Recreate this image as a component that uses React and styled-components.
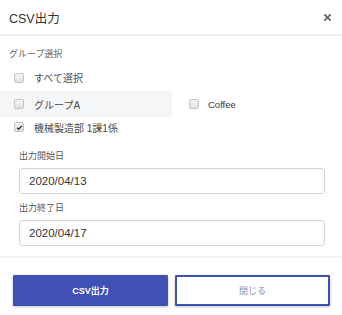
import React from 'react'
import styled, { createGlobalStyle } from 'styled-components'

const GlobalStyle = createGlobalStyle`
  html, body {
    margin: 0;
    padding: 0;
    background: #fff;
  }
  body {
    font-family: "Liberation Sans", Arial, "Noto Sans CJK JP", sans-serif;
    color: #333;
  }
`

const Dialog = styled.div`
  width: 342px;
  height: 315px;
  background: #fff;
  display: flex;
  flex-direction: column;
  overflow: hidden;
`

const Header = styled.div`
  height: 34px;
  display: flex;
  align-items: center;
  justify-content: space-between;
  padding: 0 9px 0 9px;
  border-bottom: 2px solid #f1f1f1;
`

const Title = styled.h2`
  margin: 0;
  font-size: 12.5px;
  font-weight: 400;
  color: #333;
  padding-top: 1px;
`

const Close = styled.button`
  border: none;
  background: none;
  padding: 0;
  width: 12px;
  height: 12px;
  display: flex;
  align-items: center;
  justify-content: center;
  cursor: pointer;
`

const Body = styled.div`
  flex: 1;
  padding: 11px 0 0 0;
  border-bottom: 2px solid #f3f3f3;
`

const SectionLabel = styled.div`
  font-size: 9px;
  color: #666;
  padding: 0 9px;
  height: 14px;
  line-height: 14px;
`

const CheckGrid = styled.div`
  display: grid;
  grid-template-columns: 172px 1fr;
  margin-top: 3px;
`

const CheckRow = styled.label`
  grid-column: ${p => (p.$full ? '1 / -1' : 'auto')};
  display: flex;
  align-items: center;
  gap: ${p => p.$gap || 10}px;
  height: ${p => p.$h || 25}px;
  padding-left: ${p => p.$indent || 14}px;
  background: ${p => (p.$hover ? '#f5f6f8' : 'transparent')};
  font-size: ${p => p.$size || 10}px;
  color: ${p => (p.$dark ? '#333' : '#4a4a4a')};
  cursor: pointer;
`

const Box = styled.span`
  width: 8px;
  height: 8px;
  border: 1px solid #c4c4c4;
  border-radius: 2px;
  background: linear-gradient(#f4f4f4, #e2e2e2);
  display: inline-flex;
  align-items: center;
  justify-content: center;
  flex-shrink: 0;
`

const Field = styled.div`
  padding: 0 17px 0 19px;
  display: flex;
  flex-direction: column;
`

const FieldLabel = styled.div`
  font-size: 9px;
  color: #555;
  height: 14px;
  line-height: 14px;
  margin: ${p => p.$top}px 0 5px 0;
`

const DateInput = styled.div`
  height: 24px;
  border: 1px solid #d3d6db;
  border-radius: 3px;
  display: flex;
  align-items: center;
  padding-left: 9px;
  font-size: 11.5px;
  color: #333;
  box-shadow: inset 0 1px 1px rgba(0, 0, 0, 0.04);
`

const Footer = styled.div`
  height: 57px;
  display: grid;
  grid-template-columns: 155px 155px;
  gap: 7px;
  padding: 17px 12px 0 13px;
  box-sizing: border-box;
`

const Button = styled.button`
  height: 31px;
  border-radius: 1px;
  font-family: inherit;
  font-size: 9px;
  cursor: pointer;
  box-shadow: 0 1px 3px rgba(0, 0, 0, 0.25);
  background: ${p => (p.$primary ? '#3f51b5' : '#fff')};
  color: ${p => (p.$primary ? '#fff' : '#8a8fae')};
  font-weight: ${p => (p.$primary ? 700 : 400)};
  border: ${p => (p.$primary ? 'none' : '2px solid #3f51b5')};
`

const Checkbox = ({ checked }) => (
  <Box>
    {checked && (
      <svg width="7" height="7" viewBox="0 0 8 8">
        <path d="M1.3 4.2 L3.1 6 L6.8 1.8" fill="none" stroke="#333" strokeWidth="1.5" />
      </svg>
    )}
  </Box>
)

export default function App() {
  return (
    <>
      <GlobalStyle />
      <Dialog>
        <Header>
          <Title>CSV出力</Title>
          <Close aria-label="close">
            <svg width="9" height="9" viewBox="0 0 10 10">
              <path d="M1.5 1.5 L8.5 8.5 M8.5 1.5 L1.5 8.5" stroke="#666" strokeWidth="2" />
            </svg>
          </Close>
        </Header>
        <Body>
          <SectionLabel>グループ選択</SectionLabel>
          <CheckGrid>
            <CheckRow $full $h={27}>
              <Checkbox />
              すべて選択
            </CheckRow>
            <CheckRow $hover $h={26}>
              <Checkbox />
              グループA
            </CheckRow>
            <CheckRow $indent={17} $gap={9} $h={26} $dark $size={9.5}>
              <Checkbox />
              Coffee
            </CheckRow>
            <CheckRow $full $h={20}>
              <Checkbox checked />
              機械製造部 1課1係
            </CheckRow>
          </CheckGrid>
          <Field>
            <FieldLabel $top={12}>出力開始日</FieldLabel>
            <DateInput>2020/04/13</DateInput>
            <FieldLabel $top={7}>出力終了日</FieldLabel>
            <DateInput>2020/04/17</DateInput>
          </Field>
        </Body>
        <Footer>
          <Button $primary>CSV出力</Button>
          <Button>閉じる</Button>
        </Footer>
      </Dialog>
    </>
  )
}
